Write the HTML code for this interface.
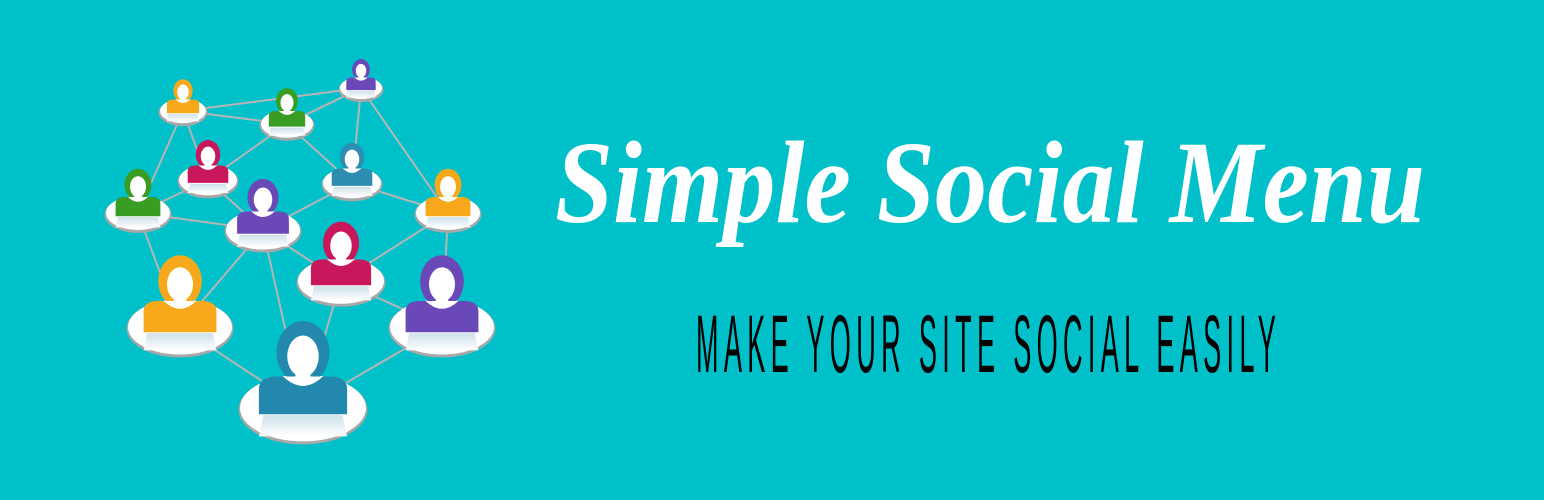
<!DOCTYPE html>
<html><head><meta charset="utf-8"><style>
html,body{margin:0;padding:0;background:#00C1CA;width:1544px;height:500px;overflow:hidden}
svg{position:absolute;left:0;top:0}
</style></head><body>
<svg id="s" width="1544" height="500" viewBox="0 0 1544 500">
<defs>
<linearGradient id="rf" x1="0" y1="0" x2="0" y2="1"><stop offset="0" stop-color="#c8dde6"/><stop offset="1" stop-color="#ffffff"/></linearGradient>
</defs>
<g id="lines" stroke="#b5b5b5" stroke-width="2"></g>
<g id="nodes"></g>
<text x="555" y="222" fill="#fff" font-family="Liberation Serif, serif" font-style="italic" font-weight="bold" font-size="118" textLength="870" lengthAdjust="spacingAndGlyphs">Simple Social Menu</text>
<text transform="translate(696,372) scale(0.33,1)" fill="#000" font-family="Liberation Sans, sans-serif" font-size="82" textLength="1757" lengthAdjust="spacing">MAKE YOUR SITE SOCIAL EASILY</text>
</svg>
<script>
var N=[[183,111,23,'#f7a81b'],[287,124,26,'#3a9d23'],[361,88,21,'#6a48b8'],[208,180,29,'#c8175a'],[352,183,29,'#2e8db0'],[138,213,32,'#3a9d23'],[263,230,37,'#6a48b8'],[448,213,32,'#f7a81b'],[341,281,43,'#c8175a'],[180,327,52,'#f7a81b'],[442,327,52,'#6a48b8'],[303,408,63,'#2288ad']];
var E=[[0,1],[1,2],[0,3],[0,5],[1,3],[1,4],[2,1],[2,4],[2,7],[3,5],[3,6],[5,6],[4,6],[4,7],[5,9],[6,9],[6,8],[6,11],[7,8],[7,10],[8,10],[8,11],[9,11],[10,11],[0,2]];
var L=document.getElementById('lines'),G=document.getElementById('nodes'),h='';
E.forEach(function(e){var a=N[e[0]],b=N[e[1]];h+='<line x1="'+a[0]+'" y1="'+a[1]+'" x2="'+b[0]+'" y2="'+b[1]+'"/>';});
L.innerHTML=h;h='';
N.forEach(function(n){var x=n[0],y=n[1],r=n[2],c=n[3],ry=r*0.53;
h+='<ellipse cx="'+x+'" cy="'+(y+1.5)+'" rx="'+(r+1.5)+'" ry="'+(ry+1.5)+'" fill="#a8a8a8"/>';
h+='<ellipse cx="'+x+'" cy="'+y+'" rx="'+r+'" ry="'+ry+'" fill="#fff"/>';
var bw=r*0.7,bt=y-r*0.5,bb=y+r*0.1;
h+='<path d="M'+(x-bw)+' '+(y+r*0.45)+'L'+(x+bw)+' '+(y+r*0.45)+'L'+(x+bw*0.9)+' '+(bb+1)+'L'+(x-bw*0.9)+' '+(bb+1)+'Z" fill="url(#rf)" opacity="0.9"/>';
h+='<path d="M'+(x-bw)+' '+bb+'L'+(x-bw)+' '+(bt+r*0.2)+'Q'+(x-bw)+' '+bt+' '+(x-bw*0.6)+' '+bt+'L'+(x+bw*0.6)+' '+bt+'Q'+(x+bw)+' '+bt+' '+(x+bw)+' '+(bt+r*0.2)+'L'+(x+bw)+' '+bb+'Z" fill="'+c+'"/>';
h+='<ellipse cx="'+x+'" cy="'+(y-r*0.88)+'" rx="'+(r*0.42)+'" ry="'+(r*0.5)+'" fill="'+c+'"/>';
h+='<rect x="'+(x-r*0.12)+'" y="'+(y-r*0.7)+'" width="'+(r*0.24)+'" height="'+(r*0.25)+'" fill="#fff"/>';
h+='<ellipse cx="'+x+'" cy="'+(y-r*0.82)+'" rx="'+(r*0.25)+'" ry="'+(r*0.33)+'" fill="#fff"/>';
h+='<path d="M'+(x-bw*0.45)+' '+bt+'Q'+x+' '+(bt+r*0.3)+' '+(x+bw*0.45)+' '+bt+'Z" fill="#fff"/>';
});
G.innerHTML=h;
</script>
</body></html>
